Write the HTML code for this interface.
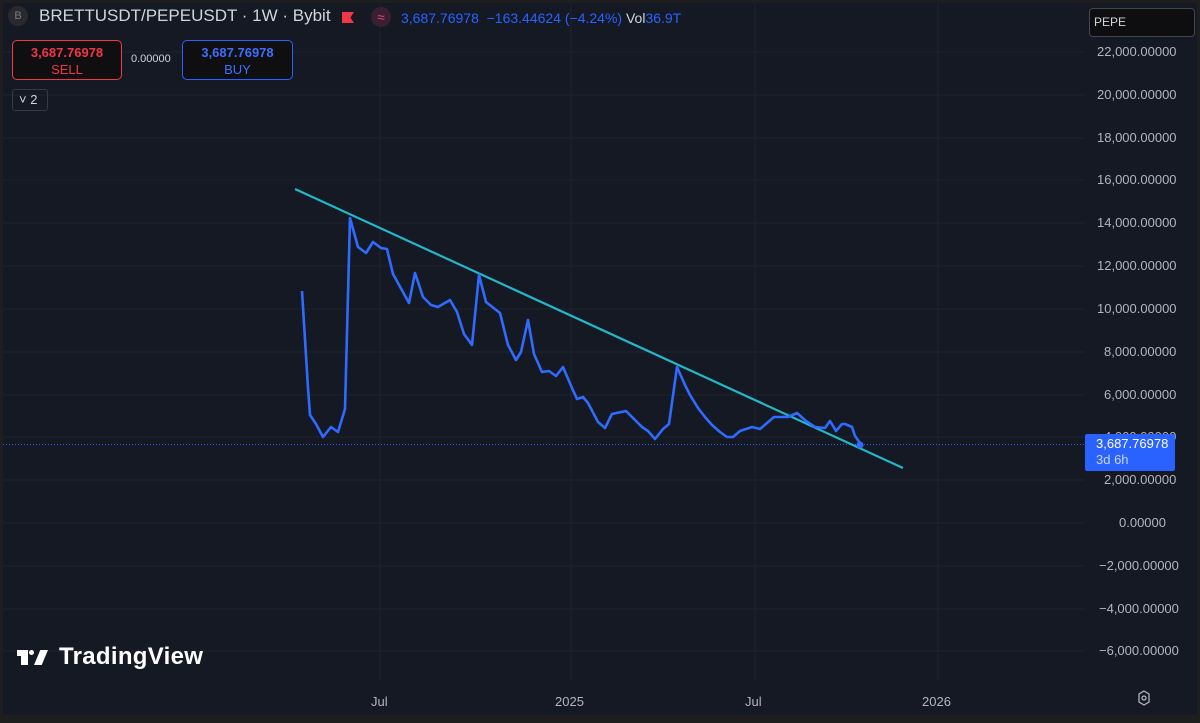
<!DOCTYPE html>
<html><head><meta charset="utf-8"><style>
*{margin:0;padding:0;box-sizing:border-box}
body{width:1200px;height:723px;background:#1e1e1e;overflow:hidden;font-family:"Liberation Sans",sans-serif;position:relative}
#c{position:absolute;left:3px;top:3px;width:1194px;height:712px;background:#151924}
.t{position:absolute;white-space:nowrap}
.ax{position:absolute;left:1097px;color:#b2b5be;font-size:13px}
.xl{position:absolute;top:694px;color:#b2b5be;font-size:13px}
</style></head><body>
<div id="c"></div>
<svg width="1200" height="723" style="position:absolute;left:0;top:0">
<g stroke="#1f232e" stroke-width="1">
<line x1="3" y1="52" x2="1085" y2="52"/><line x1="3" y1="95" x2="1085" y2="95"/><line x1="3" y1="138" x2="1085" y2="138"/><line x1="3" y1="180" x2="1085" y2="180"/><line x1="3" y1="223" x2="1085" y2="223"/><line x1="3" y1="266" x2="1085" y2="266"/><line x1="3" y1="309" x2="1085" y2="309"/><line x1="3" y1="352" x2="1085" y2="352"/><line x1="3" y1="395" x2="1085" y2="395"/><line x1="3" y1="437" x2="1085" y2="437"/><line x1="3" y1="480" x2="1085" y2="480"/><line x1="3" y1="523" x2="1085" y2="523"/><line x1="3" y1="566" x2="1085" y2="566"/><line x1="3" y1="609" x2="1085" y2="609"/><line x1="3" y1="651" x2="1085" y2="651"/>
<line x1="380" y1="3" x2="380" y2="680"/><line x1="571" y1="3" x2="571" y2="680"/><line x1="755" y1="3" x2="755" y2="680"/><line x1="938" y1="3" x2="938" y2="680"/>
</g>
<line x1="3" y1="444.5" x2="1085" y2="444.5" stroke="#2962ff" stroke-width="1" stroke-dasharray="1 2"/>
<line x1="295" y1="189" x2="903" y2="468" stroke="#22b8c8" stroke-width="2.2"/>
<polyline fill="none" stroke="#2f6bff" stroke-width="2.6" stroke-linejoin="round" points="302,291 308,388 310,415 316,424 323,437 331,427 338,432 345,409 350,218 358,247 366,253 373,242 381,248 387,249 393,274 409,303 415,273 423,297 431,305 438,307 450,300 457,312 464,334 472,345 479,275 486,302 500,313 508,345 516,360 521,352 528,320 534,354 542,372 549,371 556,376 563,367 572,388 577,399 583,397 588,403 598,422 605,428 612,414 626,411 637,422 642,427 648,431 655,439 663,429 669,424 677,367 685,385 690,395 698,408 705,417 712,425 720,432 727,437 733,437 740,431 752,427 760,429 774,417 788,417 797,413 806,421 815,427 825,428 830,421 836,431 842,424 845,424 852,427 855,436 860,443"/>
<circle cx="860" cy="445" r="3.5" fill="#2f6bff"/>
<g transform="translate(1138,690)" fill="none" stroke="#b2b5be" stroke-width="1.3"><polygon points="6,1 11,4 11,12 6,15 1,12 1,4"/><circle cx="6" cy="8" r="2"/></g>
</svg>
<div class="t" style="left:8px;top:6px;width:20px;height:20px;border-radius:50%;background:#2a2a2e;color:#787b86;font-size:11px;text-align:center;line-height:20px">B</div>
<div class="t" style="left:39px;top:6px;color:#d1d4dc;font-size:17px">BRETTUSDT/PEPEUSDT · 1W · Bybit</div>
<div class="t" style="left:342px;top:12px;width:12px;height:11px;background:#f23645;clip-path:polygon(0 0,100% 0,70% 50%,100% 100%,0 100%)"></div>
<div class="t" style="left:371px;top:7px;width:20px;height:20px;border-radius:50%;background:#3a1f30;color:#e0457b;font-size:14px;text-align:center;line-height:20px">≈</div>
<div class="t" style="left:401px;top:10px;color:#2962ff;font-size:14px">3,687.76978 &nbsp;−163.44624 (−4.24%) <span style="color:#d1d4dc">Vol</span>36.9T</div>
<div class="t" style="left:12px;top:40px;width:110px;height:40px;border:1px solid #f23645;border-radius:5px;background:#0f0f12;color:#f23645;font-size:13px;text-align:center;line-height:17px;padding-top:3px"><b>3,687.76978</b><br>SELL</div>
<div class="t" style="left:131px;top:53px;color:#d1d4dc;font-size:11px">0.00000</div>
<div class="t" style="left:182px;top:40px;width:111px;height:40px;border:1px solid #2962ff;border-radius:5px;background:#0f0f12;color:#3d6fff;font-size:13px;text-align:center;line-height:17px;padding-top:3px"><b>3,687.76978</b><br>BUY</div>
<div class="t" style="left:12px;top:89px;width:36px;height:22px;border:1px solid #363a45;border-radius:3px;color:#d1d4dc;font-size:13px;line-height:20px;padding-left:6px">˅ 2</div>
<div class="t" style="left:1089px;top:8px;width:106px;height:29px;border:1px solid #434651;border-radius:4px;background:#0e0e10;color:#d1d4dc;font-size:12px;line-height:27px;padding-left:4px">PEPE</div>
<div class="ax" style="top:44px">22,000.00000</div>
<div class="ax" style="top:87px">20,000.00000</div>
<div class="ax" style="top:130px">18,000.00000</div>
<div class="ax" style="top:172px">16,000.00000</div>
<div class="ax" style="top:215px">14,000.00000</div>
<div class="ax" style="top:258px">12,000.00000</div>
<div class="ax" style="top:301px">10,000.00000</div>
<div class="ax" style="top:344px;left:1104px">8,000.00000</div>
<div class="ax" style="top:387px;left:1104px">6,000.00000</div>
<div class="ax" style="top:429px;left:1104px">4,000.00000</div>
<div class="ax" style="top:472px;left:1104px">2,000.00000</div>
<div class="ax" style="top:515px;left:1119px">0.00000</div>
<div class="ax" style="top:558px;left:1099px">−2,000.00000</div>
<div class="ax" style="top:601px;left:1099px">−4,000.00000</div>
<div class="ax" style="top:643px;left:1099px">−6,000.00000</div>
<div class="t" style="left:1085px;top:434px;width:90px;height:37px;background:#2962ff;border-radius:2px;color:#fff;font-size:13px;line-height:16px;padding:2px 0 0 11px">3,687.76978<br><span style="color:#c8d6ff">3d 6h</span></div>
<div class="xl" style="left:371px">Jul</div>
<div class="xl" style="left:555px">2025</div>
<div class="xl" style="left:745px">Jul</div>
<div class="xl" style="left:922px">2026</div>
<div class="t" style="left:17px;top:650px;width:8px;height:6px;background:#fff"></div>
<div class="t" style="left:21px;top:650px;width:7px;height:15px;background:#fff"></div>
<div class="t" style="left:29px;top:650px;width:5px;height:5px;border-radius:50%;background:#fff"></div>
<div class="t" style="left:34px;top:650px;width:14px;height:15px;background:#fff;clip-path:polygon(45% 0,100% 0,55% 100%,0 100%)"></div>
<div class="t" style="left:59px;top:643px;color:#fff;font-size:24px;font-weight:bold;letter-spacing:0.3px">TradingView</div>
</body></html>
